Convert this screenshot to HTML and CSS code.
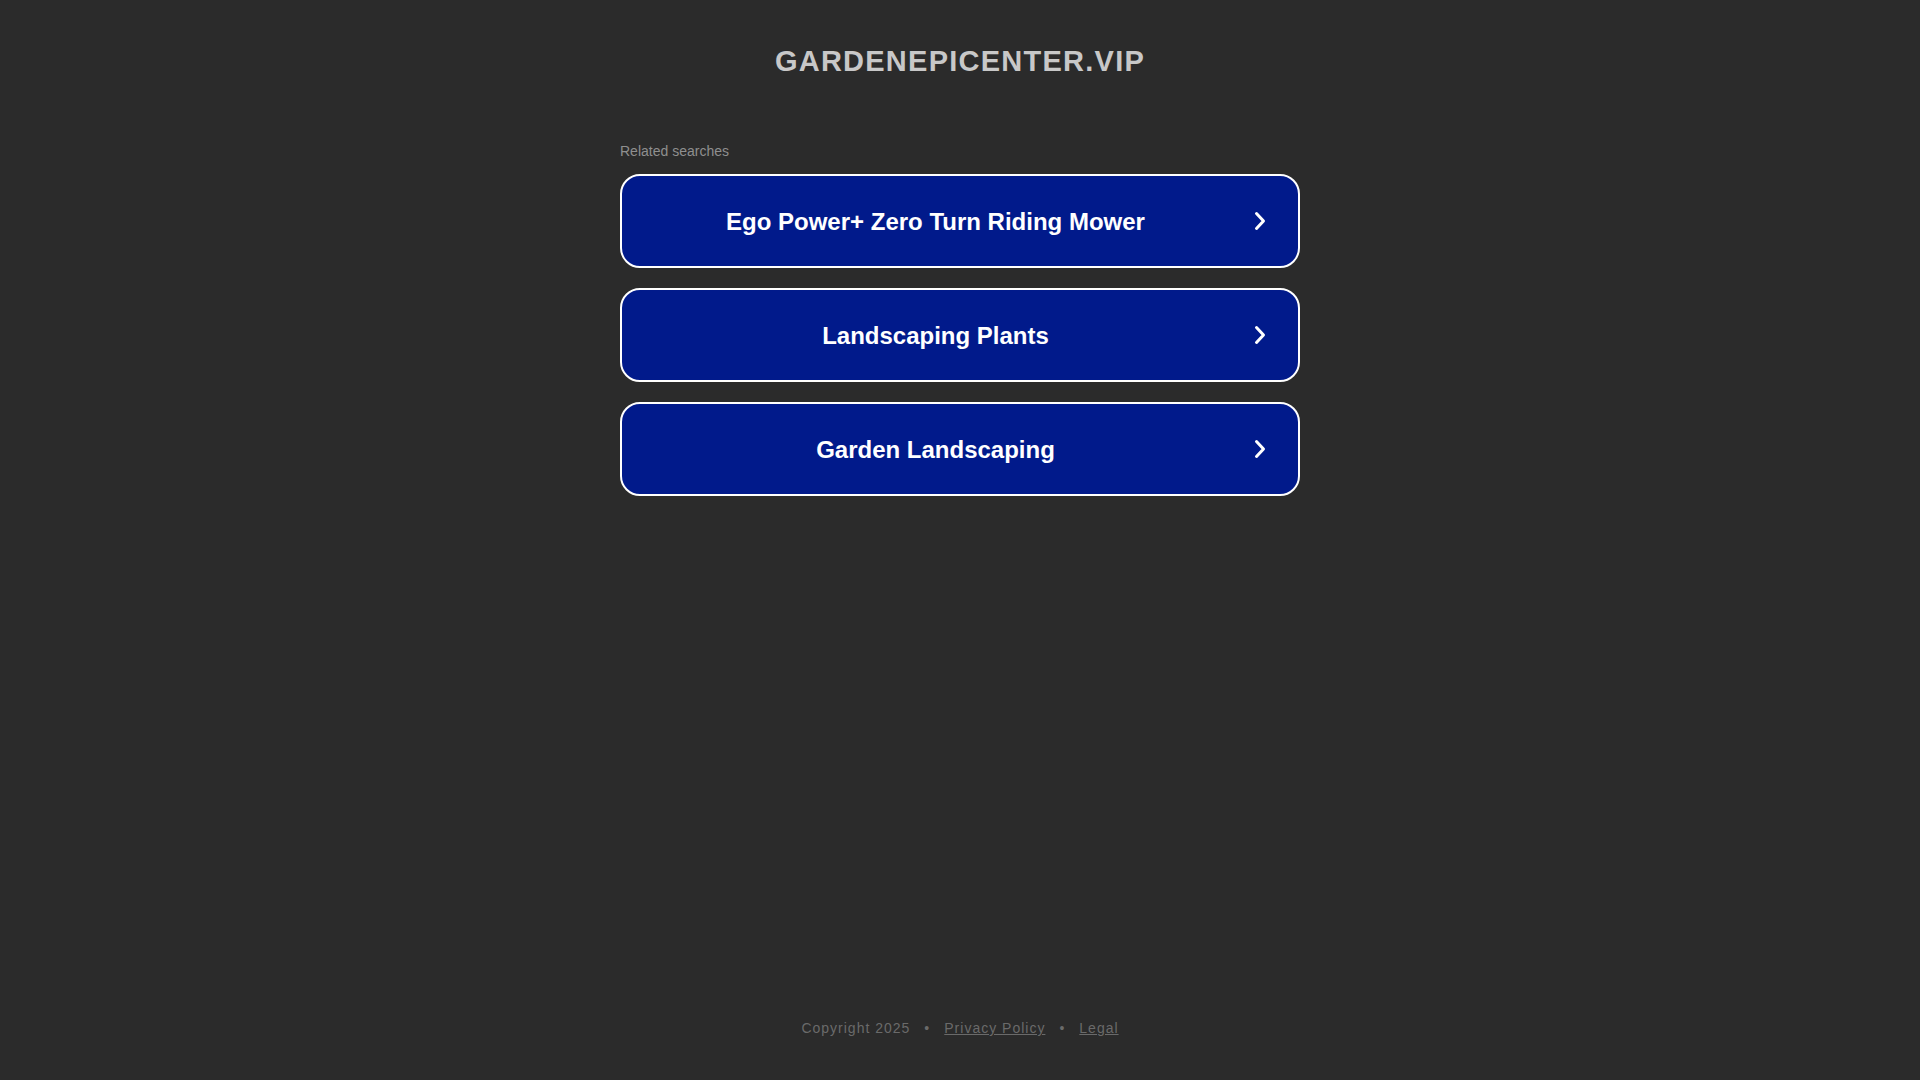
FILE: index.html
```html
<!DOCTYPE html>
<html lang="en">
<head>
<meta charset="utf-8">
<title>gardenepicenter.vip</title>
<link rel="stylesheet" href="styles.css">
</head>
<body>
<div class="page">
  <header class="header">
    <h1 class="domain">GARDENEPICENTER.VIP</h1>
  </header>
  <main class="main">
    <div class="related">Related searches</div>
    <div class="list">
      <a class="btn" href="#"><span class="btn-text">Ego Power+ Zero Turn Riding Mower</span><span class="chev"><svg width="14" height="20" viewBox="0 0 14 20"><path d="M3.5 2.5 L10.5 10 L3.5 17.5" fill="none" stroke="#fff" stroke-width="3" stroke-linecap="round" stroke-linejoin="round"/></svg></span></a>
      <a class="btn" href="#"><span class="btn-text">Landscaping Plants</span><span class="chev"><svg width="14" height="20" viewBox="0 0 14 20"><path d="M3.5 2.5 L10.5 10 L3.5 17.5" fill="none" stroke="#fff" stroke-width="3" stroke-linecap="round" stroke-linejoin="round"/></svg></span></a>
      <a class="btn" href="#"><span class="btn-text">Garden Landscaping</span><span class="chev"><svg width="14" height="20" viewBox="0 0 14 20"><path d="M3.5 2.5 L10.5 10 L3.5 17.5" fill="none" stroke="#fff" stroke-width="3" stroke-linecap="round" stroke-linejoin="round"/></svg></span></a>
    </div>
  </main>
  <footer class="footer">
    <span>Copyright 2025</span><span class="dot">•</span><a href="#">Privacy Policy</a><span class="dot">•</span><a href="#">Legal</a>
  </footer>
</div>
</body>
</html>
```

FILE: styles.css
```css
html, body {
  margin: 0;
  padding: 0;
  background: #2b2b2b;
}
body {
  font-family: "Liberation Sans", Arial, sans-serif;
}
.page {
  min-height: 100vh;
  display: flex;
  flex-direction: column;
  align-items: center;
}
.header {
  padding-top: 47px;
}
.domain {
  margin: 0;
  font-size: 29px;
  line-height: 1;
  font-weight: bold;
  letter-spacing: 1.25px;
  color: #c8c8c8;
}
.main {
  width: 680px;
  margin-top: 68px;
}
.related {
  font-size: 14px;
  line-height: 1;
  color: #8f8f8f;
  height: 14px;
}
.list {
  margin-top: 16px;
  display: flex;
  flex-direction: column;
  gap: 20px;
}
.btn {
  box-sizing: border-box;
  height: 94px;
  display: flex;
  align-items: center;
  padding: 0 7px 0 20px;
  background: #011a8b;
  border: 2px solid #fff;
  border-radius: 20px;
  text-decoration: none;
  color: #fff;
}
.btn-text {
  flex: 1;
  text-align: center;
  font-size: 24px;
  font-weight: bold;
  padding-top: 2px;
}
.chev {
  width: 62px;
  display: flex;
  justify-content: center;
  align-items: center;
}
.chev svg {
  display: block;
}
.footer {
  margin-top: auto;
  padding-bottom: 45px;
  font-size: 14px;
  line-height: 1;
  letter-spacing: 1px;
  color: #6a6a6a;
  display: flex;
  align-items: center;
}
.footer a {
  color: #6a6a6a;
  text-decoration: underline;
}
.dot {
  margin: 0 14px;
}
```
